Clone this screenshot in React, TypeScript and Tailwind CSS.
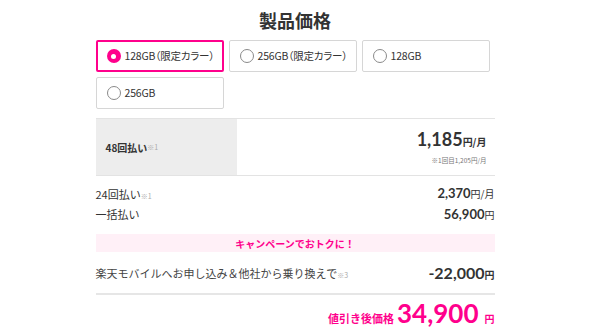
import React from "react";

const jp = { fontFamily: '"Noto Sans CJK JP", "Noto Sans", sans-serif' };
const num = { fontFamily: 'Lato, "Noto Sans CJK JP", sans-serif' };

function Option({ label, selected }: { label: string; selected?: boolean }) {
  return (
    <div
      className={
        "flex h-[32px] w-[128px] items-center rounded-[2px] " +
        (selected ? "border-2 border-[#ff008c] pl-[9px]" : "border border-[#d6d6d6] pl-[10px]")
      }
    >
      {selected ? (
        <span className="flex h-[14px] w-[14px] shrink-0 items-center justify-center rounded-full bg-[#ff008c]">
          <span className="h-[5px] w-[5px] rounded-full bg-white" />
        </span>
      ) : (
        <span className="h-[14px] w-[14px] shrink-0 rounded-full border border-[#8a8a8a] bg-white" />
      )}
      <span className="ml-[4px] whitespace-nowrap text-[10.5px] tracking-[-0.2px] text-[#333] [font-feature-settings:'palt']">
        {label}
      </span>
    </div>
  );
}

export default function App() {
  return (
    <div className="h-[332px] w-[590px] overflow-hidden bg-white text-[#333]" style={jp}>
      <div className="mx-auto flex w-[399px] flex-col pt-[8px]">
        <h1 className="text-center text-[18px] font-bold leading-[24px] text-[#333]">製品価格</h1>
        <div className="mt-[8px] flex flex-wrap gap-x-[5px] gap-y-[5px]">
          <Option label="128GB（限定カラー）" selected />
          <Option label="256GB（限定カラー）" />
          <Option label="128GB" />
          <Option label="256GB" />
        </div>
        <div className="mt-[9px] flex h-[58px] border-y border-[#e3e3e3]">
          <div className="flex w-[141px] items-center bg-[#ededed] pl-[10px]">
            <span className="text-[10px] font-bold">48回払い</span>
            <span className="text-[7px] text-[#aaa]">※1</span>
          </div>
          <div className="flex flex-1 flex-col items-end pr-[8px] pt-[9px]">
            <div className="flex items-baseline font-bold">
              <span className="text-[18px] leading-[22px]" style={num}>1,185</span>
              <span className="text-[10px]">円/月</span>
            </div>
            <div className="mt-[6px] text-[6.5px] text-[#777]">※1回目1,205円/月</div>
          </div>
        </div>
        <div className="mt-[8px] flex items-center justify-between">
          <div className="flex items-baseline">
            <span className="text-[11px]">24回払い</span>
            <span className="text-[7px] text-[#aaa]">※1</span>
          </div>
          <div className="flex items-baseline font-bold">
            <span className="text-[13px]" style={num}>2,370</span>
            <span className="text-[10px] font-normal">円/月</span>
          </div>
        </div>
        <div className="mt-[1px] flex items-center justify-between">
          <span className="text-[11px]">一括払い</span>
          <div className="flex items-baseline font-bold">
            <span className="text-[13px]" style={num}>56,900</span>
            <span className="text-[10px] font-normal">円</span>
          </div>
        </div>
        <div className="mt-[10px] flex h-[18px] items-center justify-center bg-[#fff0f7]">
          <span className="text-[10px] font-bold text-[#ff008c]">キャンペーンでおトクに！</span>
        </div>
        <div className="mt-[9px] flex items-center justify-between">
          <div className="flex items-baseline">
            <span className="text-[11px] text-[#444]">楽天モバイルへお申し込み＆他社から乗り換えで</span>
            <span className="text-[7px] text-[#aaa]">※3</span>
          </div>
          <div className="flex items-baseline font-bold">
            <span className="text-[16px]" style={num}>-22,000</span>
            <span className="text-[10px]">円</span>
          </div>
        </div>
        <div className="mt-[8px] h-[2px] bg-[#e6e6e6]" />
        <div className="mt-[5px] flex items-baseline justify-end font-bold text-[#ff008c]">
          <span className="text-[11px]">値引き後価格</span>
          <span className="ml-[3px] text-[26px] leading-[26px]" style={num}>34,900</span>
          <span className="ml-[6px] text-[10px]">円</span>
        </div>
      </div>
    </div>
  );
}
